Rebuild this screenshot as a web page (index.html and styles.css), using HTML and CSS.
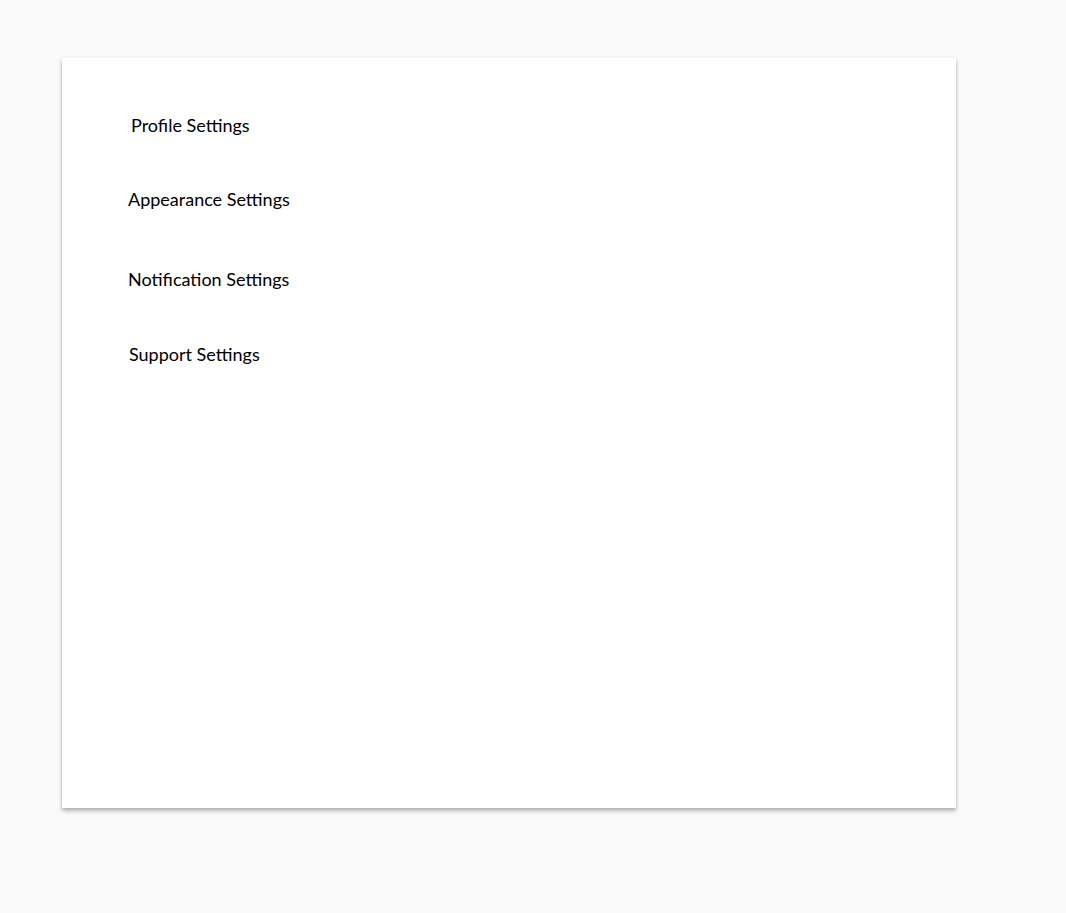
FILE: index.html
```html
<!DOCTYPE html>
<html>
<head>
<meta charset="utf-8">
<link rel="stylesheet" href="styles.css">
</head>
<body>
<div class="page">
  <div class="card">
    <ul class="menu">
      <li class="item item-profile">Profile Settings</li>
      <li class="item item-appearance">Appearance Settings</li>
      <li class="item item-notification">Notification Settings</li>
      <li class="item item-support">Support Settings</li>
    </ul>
  </div>
</div>
</body>
</html>
```
FILE: styles.css
```css
html, body {
  margin: 0;
  padding: 0;
  background: #fafafa;
  font-family: Lato, "Open Sans", sans-serif;
}
.page {
  padding: 58px 0 60px 62px;
}
.card {
  width: 894px;
  height: 750px;
  background: #ffffff;
  box-shadow: 0 3px 4px rgba(0, 0, 0, 0.28), 0 0 3px rgba(0, 0, 0, 0.08);
  box-sizing: border-box;
  padding-top: 57px;
}
.menu {
  list-style: none;
  margin: 0;
  padding: 0;
  display: flex;
  flex-direction: column;
  align-items: flex-start;
}
.item {
  font-size: 18px;
  line-height: 20px;
  color: #000;
  padding-left: 66px;
}
.item-profile { padding-left: 69px; }
.item-appearance { margin-top: 54px; }
.item-notification { margin-top: 60px; }
.item-support { margin-top: 55px; padding-left: 67px; }
```
